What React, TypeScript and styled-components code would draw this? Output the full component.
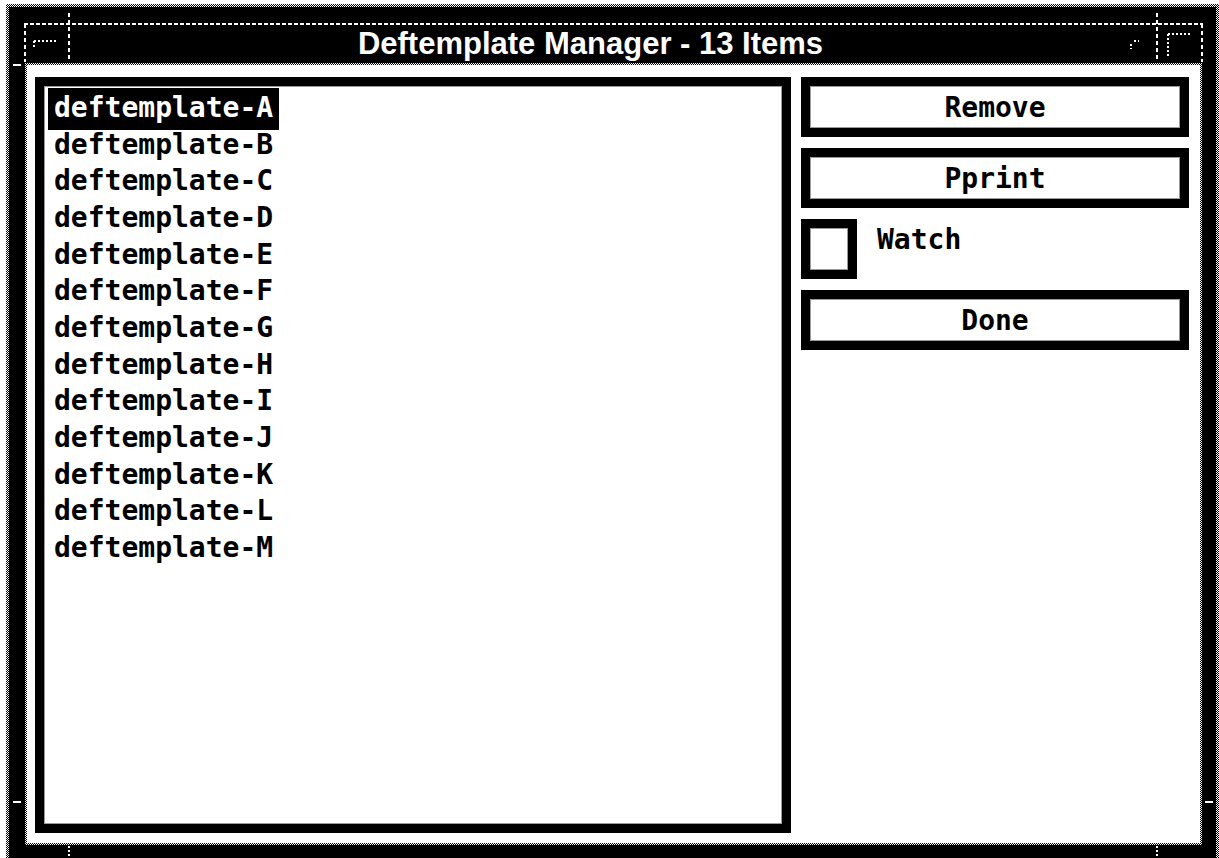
import React from "react";
import styled, { createGlobalStyle } from "styled-components";

const GlobalStyle = createGlobalStyle`
  html, body { margin: 0; padding: 0; background: #fff; }
  body { width: 1219px; height: 858px; overflow: hidden; }
`;

const stipple = `repeating-conic-gradient(#000 0% 25%, #fff 0% 50%) 0 0 / 2px 2px`;

const Frame = styled.div`
  margin: 4px 0 0 6px;
  width: 1213px;
  height: 854px;
  box-sizing: border-box;
  padding: 3px 3px 0 3px;
  background: ${stipple};
`;

const Inner = styled.div`
  position: relative;
  height: 100%;
  background: #000;
  display: flex;
  flex-direction: column;
  padding: 0 14px 13px 16px;
  box-sizing: border-box;
`;

const Decor = styled.svg`
  position: absolute;
  left: 0;
  top: 0;
  width: 1207px;
  height: 851px;
  pointer-events: none;
`;

const TitleBar = styled.div`
  position: relative;
  height: 56px;
  flex: none;
  display: flex;
  justify-content: center;
  align-items: flex-start;
  padding: 19px 46px 0 0;
  box-sizing: border-box;
`;

const Title = styled.div`
  color: #fff;
  font-family: "Liberation Sans", Arial, sans-serif;
  font-weight: bold;
  font-size: 31px;
  line-height: normal;
  white-space: nowrap;
`;

const ContentFrame = styled.div`
  position: relative;
  flex: 1;
  padding: 2px;
  background: ${stipple};
  display: flex;
`;

const Content = styled.div`
  flex: 1;
  background: #fff;
  display: flex;
  gap: 10px;
  padding: 12px 11px 10px 8px;
  box-sizing: border-box;
`;

const ListBox = styled.div`
  width: 756px;
  flex: none;
  box-sizing: border-box;
  border: 9px solid #000;
  background: #fff;
  box-shadow: inset 0 0 0 1px #9a9a9a;
  padding: 4px 4px;
  display: flex;
  flex-direction: column;
  align-items: flex-start;
`;

const Item = styled.div<{ $selected?: boolean }>`
  font-family: "DejaVu Sans Mono", "Liberation Mono", monospace;
  font-weight: bold;
  font-size: 28px;
  line-height: 36.67px;
  height: 36.67px;
  padding: 0 6px;
  white-space: nowrap;
  color: ${(p) => (p.$selected ? "#fff" : "#000")};
  background: ${(p) => (p.$selected ? "#000" : "transparent")};
  box-shadow: ${(p) => (p.$selected ? "0 -2px 0 #000, 0 3px 0 #000" : "none")};
`;

const Side = styled.div`
  width: 388px;
  flex: none;
  display: flex;
  flex-direction: column;
  gap: 11px;
`;

const Button = styled.div`
  height: 60px;
  box-sizing: border-box;
  border: 9px solid #000;
  box-shadow: inset 0 0 0 1px #9a9a9a;
  display: flex;
  align-items: center;
  justify-content: center;
  font-family: "DejaVu Sans Mono", "Liberation Mono", monospace;
  font-weight: bold;
  font-size: 28px;
  color: #000;
`;

const CheckRow = styled.div`
  height: 60px;
  display: flex;
  align-items: flex-start;
`;

const CheckBox = styled.div`
  width: 56px;
  height: 60px;
  box-sizing: border-box;
  border: 9px solid #000;
  box-shadow: inset 0 0 0 1px #9a9a9a;
  flex: none;
`;

const CheckLabel = styled.div`
  margin-left: 20px;
  margin-top: 3px;
  font-family: "DejaVu Sans Mono", "Liberation Mono", monospace;
  font-weight: bold;
  font-size: 28px;
  line-height: 36.67px;
  color: #000;
`;

const items = "ABCDEFGHIJKLM".split("").map((c) => `deftemplate-${c}`);

export default function App() {
  // Decor coordinates are relative to Inner (page x - 9, page y - 7)
  const ox = 9;
  const oy = 7;
  const X = (x: number) => x - ox;
  const Y = (y: number) => y - oy;
  return (
    <>
      <GlobalStyle />
      <Frame>
        <Inner>
          <Decor viewBox="0 0 1207 851">
            <g stroke="#fff" strokeWidth="2" fill="none">
              <line x1={X(24)} y1={Y(24)} x2={X(1203)} y2={Y(24)} strokeDasharray="4 2" />
              <line x1={X(25)} y1={Y(24)} x2={X(25)} y2={Y(62)} strokeDasharray="4 3" />
              <line x1={X(69)} y1={Y(13)} x2={X(69)} y2={Y(62)} strokeDasharray="4 3" />
              <line x1={X(1157)} y1={Y(13)} x2={X(1157)} y2={Y(62)} strokeDasharray="4 3" />
              <line x1={X(1202)} y1={Y(24)} x2={X(1202)} y2={Y(62)} strokeDasharray="4 3" />
              <line x1={X(34)} y1={Y(41)} x2={X(57)} y2={Y(41)} strokeDasharray="2 2" />
              <line x1={X(34)} y1={Y(41)} x2={X(34)} y2={Y(49)} strokeDasharray="2 2" />
              <line x1={X(1134)} y1={Y(41)} x2={X(1139)} y2={Y(41)} strokeDasharray="2 2" />
              <line x1={X(1131)} y1={Y(44)} x2={X(1131)} y2={Y(49)} strokeDasharray="2 2" />
              <line x1={X(1168)} y1={Y(34)} x2={X(1191)} y2={Y(34)} strokeDasharray="2 2" />
              <line x1={X(1168)} y1={Y(34)} x2={X(1168)} y2={Y(56)} strokeDasharray="2 2" />
              <line x1={X(69)} y1={Y(846)} x2={X(69)} y2={Y(858)} strokeDasharray="2 2" />
              <line x1={X(1157)} y1={Y(846)} x2={X(1157)} y2={Y(858)} strokeDasharray="2 2" />
              <line x1={X(13)} y1={Y(802)} x2={X(21)} y2={Y(802)} />
              <line x1={X(13)} y1={Y(65)} x2={X(21)} y2={Y(65)} />
              <line x1={X(1205)} y1={Y(802)} x2={X(1213)} y2={Y(802)} />
            </g>
          </Decor>
          <TitleBar>
            <Title>Deftemplate Manager - 13 Items</Title>
          </TitleBar>
          <ContentFrame>
            <Content>
              <ListBox>
                {items.map((t, i) => (
                  <Item key={t} $selected={i === 0}>
                    {t}
                  </Item>
                ))}
              </ListBox>
              <Side>
                <Button>Remove</Button>
                <Button>Pprint</Button>
                <CheckRow>
                  <CheckBox />
                  <CheckLabel>Watch</CheckLabel>
                </CheckRow>
                <Button>Done</Button>
              </Side>
            </Content>
          </ContentFrame>
        </Inner>
      </Frame>
    </>
  );
}
